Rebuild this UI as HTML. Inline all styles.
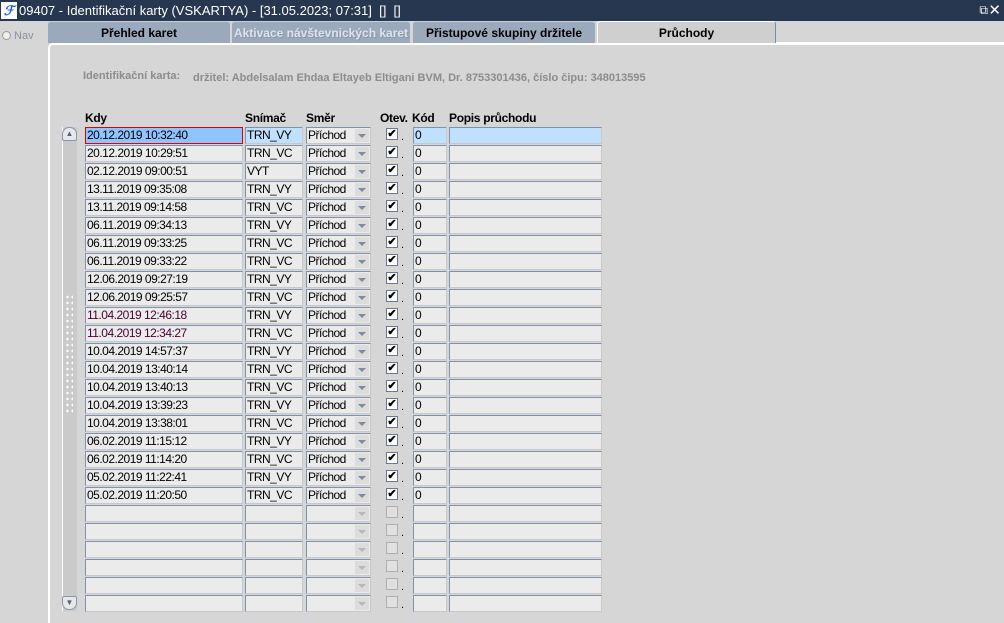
<!DOCTYPE html>
<html><head><meta charset="utf-8"><style>
*{margin:0;padding:0;box-sizing:border-box}
body{width:1004px;height:619px;background:#d6d6d6;font-family:"Liberation Sans",Arial,sans-serif;font-size:12px;position:relative;overflow:hidden}
.abs{position:absolute}
#title{left:0;top:0;width:1004px;height:21px;background:#283750;color:#fff;font-size:13px;line-height:21px;padding-left:19px}
#logo{left:1px;top:2px;width:16px;height:17px;background:#fff;color:#1a5fd0;font-weight:bold;font-style:italic;font-size:13px;line-height:17px;text-align:center}
.tab{top:21px;height:22px;background:#9ba9bd;font-weight:bold;font-size:12px;text-align:center;line-height:22px;border-top:1px solid #c8d0dc;border-radius:3px 3px 0 0}
#panel{left:48px;top:43px;width:960px;height:580px;border-left:2px solid #fff;border-top:2px solid #fff;border-radius:5px 0 0 0;background:#d6d6d6}
.lbl{font-weight:bold;color:#8c8c8c;font-size:11px}
.hd{top:111px;font-weight:bold;font-size:12px;letter-spacing:-0.3px}
.c{position:absolute;height:17px;background:#ebebeb;border:1px solid #8191ab;border-right-color:#c8c8c8;border-bottom-color:#c8c8c8;line-height:15px;padding-left:1px;font-size:12px;letter-spacing:-0.5px;white-space:nowrap;overflow:hidden}
.d{left:85px;width:158px}.s{left:245px;width:58px}.m{left:306px;width:65px}.k{left:413px;width:34px}.p{left:449px;width:153px}
.m span{position:absolute;right:1px;top:1px;width:14px;height:13px;background:#dcdcdc}
.m span:after{content:"";position:absolute;left:3px;top:5px;border:4px solid transparent;border-top:4px solid #7f8a9c;border-bottom:0}
.m.e span:after{border-top-color:#b8b8b8}
.cb{position:absolute;left:386px;width:12px;height:12px;background:#fff;border:1px solid #6a7890;font-size:11px;line-height:10px;text-align:center;font-weight:bold}
.cb.e{background:#e0e0e0;border-color:#b0b0b0}
.dot{position:absolute;left:401px;font-size:11px}
</style></head><body>
<div id="title" class="abs">09407 - Identifikační karty (VSKARTYA) - [31.05.2023; 07:31] &nbsp;[] &nbsp;[]</div>
<div id="logo" class="abs">ℱ</div>
<div class="abs" style="right:16px;top:3px;color:#fff;font-size:12px">⧉</div>
<div class="abs" style="right:3px;top:1px;color:#fff;font-size:15px">✕</div>
<div class="abs" style="left:2px;top:30px;color:#8a8fa0;font-size:11px"><span style="display:inline-block;width:9px;height:9px;border:1px solid #999;border-radius:50%;background:#eee;vertical-align:-1px"></span> Nav</div>
<div id="panel" class="abs"></div>
<div class="abs tab" style="left:48px;width:182px">Přehled karet</div>
<div class="abs tab" style="left:232px;width:178px;color:#dde3ec;text-shadow:1px 1px 0 #8a96a8">Aktivace návštevnických karet</div>
<div class="abs tab" style="left:413px;width:182px">Přistupové skupiny držitele</div>
<div class="abs tab" style="left:597px;width:179px;background:#cfcfcf;border:1px solid #fff;border-right:1px solid #7a8aa0;border-bottom:none">Průchody</div>
<div class="abs" style="left:776px;top:42px;width:228px;height:2px;background:#fff"></div>
<div class="abs lbl" style="left:83px;top:70px">Identifikační karta:</div>
<div class="abs lbl" style="left:193px;top:72px">držitel: Abdelsalam Ehdaa Eltayeb Eltigani BVM, Dr. 8753301436, číslo čipu: 348013595</div>
<div class="abs hd" style="left:85px">Kdy</div><div class="abs hd" style="left:245px">Snímač</div><div class="abs hd" style="left:306px">Směr</div><div class="abs hd" style="left:380px">Otev.</div><div class="abs hd" style="left:412px">Kód</div><div class="abs hd" style="left:449px">Popis průchodu</div>
<div class="abs" style="left:62px;top:127px;width:15px;height:484px;background:#cacaca;border-left:1px solid #fff"></div>
<div class="abs" style="left:62px;top:127px;width:15px;height:14px;border:1px solid #8a96a8;border-radius:7px 7px 2px 2px;background:#e8e8e8;font-size:8px;text-align:center;line-height:12px;color:#56627a">▲</div>
<div class="abs" style="left:62px;top:596px;width:15px;height:14px;border:1px solid #8a96a8;border-radius:2px 2px 7px 7px;background:#e8e8e8;font-size:8px;text-align:center;line-height:12px;color:#56627a">▼</div>
<div class="abs" style="left:65px;top:294px;width:8px;height:120px;background-image:radial-gradient(#fff 1px,transparent 1.2px);background-size:5px 6px"></div>

<div class="c d" style="top:127px;background:#8ec4ff;border:1px solid #e00000">20.12.2019 10:32:40</div><div class="c s" style="top:127px;background:#bfe0ff">TRN_VY</div><div class="c m" style="top:127px">Příchod<span></span></div><div class="cb" style="top:128px">✔</div><div class="dot" style="top:131px">.</div><div class="c k" style="top:127px;background:#bfe0ff">0</div><div class="c p" style="top:127px;background:#bfe0ff"></div>
<div class="c d" style="top:145px">20.12.2019 10:29:51</div><div class="c s" style="top:145px">TRN_VC</div><div class="c m" style="top:145px">Příchod<span></span></div><div class="cb" style="top:146px">✔</div><div class="dot" style="top:149px">.</div><div class="c k" style="top:145px">0</div><div class="c p" style="top:145px"></div>
<div class="c d" style="top:163px">02.12.2019 09:00:51</div><div class="c s" style="top:163px">VYT</div><div class="c m" style="top:163px">Příchod<span></span></div><div class="cb" style="top:164px">✔</div><div class="dot" style="top:167px">.</div><div class="c k" style="top:163px">0</div><div class="c p" style="top:163px"></div>
<div class="c d" style="top:181px">13.11.2019 09:35:08</div><div class="c s" style="top:181px">TRN_VY</div><div class="c m" style="top:181px">Příchod<span></span></div><div class="cb" style="top:182px">✔</div><div class="dot" style="top:185px">.</div><div class="c k" style="top:181px">0</div><div class="c p" style="top:181px"></div>
<div class="c d" style="top:199px">13.11.2019 09:14:58</div><div class="c s" style="top:199px">TRN_VC</div><div class="c m" style="top:199px">Příchod<span></span></div><div class="cb" style="top:200px">✔</div><div class="dot" style="top:203px">.</div><div class="c k" style="top:199px">0</div><div class="c p" style="top:199px"></div>
<div class="c d" style="top:217px">06.11.2019 09:34:13</div><div class="c s" style="top:217px">TRN_VY</div><div class="c m" style="top:217px">Příchod<span></span></div><div class="cb" style="top:218px">✔</div><div class="dot" style="top:221px">.</div><div class="c k" style="top:217px">0</div><div class="c p" style="top:217px"></div>
<div class="c d" style="top:235px">06.11.2019 09:33:25</div><div class="c s" style="top:235px">TRN_VC</div><div class="c m" style="top:235px">Příchod<span></span></div><div class="cb" style="top:236px">✔</div><div class="dot" style="top:239px">.</div><div class="c k" style="top:235px">0</div><div class="c p" style="top:235px"></div>
<div class="c d" style="top:253px">06.11.2019 09:33:22</div><div class="c s" style="top:253px">TRN_VC</div><div class="c m" style="top:253px">Příchod<span></span></div><div class="cb" style="top:254px">✔</div><div class="dot" style="top:257px">.</div><div class="c k" style="top:253px">0</div><div class="c p" style="top:253px"></div>
<div class="c d" style="top:271px">12.06.2019 09:27:19</div><div class="c s" style="top:271px">TRN_VY</div><div class="c m" style="top:271px">Příchod<span></span></div><div class="cb" style="top:272px">✔</div><div class="dot" style="top:275px">.</div><div class="c k" style="top:271px">0</div><div class="c p" style="top:271px"></div>
<div class="c d" style="top:289px">12.06.2019 09:25:57</div><div class="c s" style="top:289px">TRN_VC</div><div class="c m" style="top:289px">Příchod<span></span></div><div class="cb" style="top:290px">✔</div><div class="dot" style="top:293px">.</div><div class="c k" style="top:289px">0</div><div class="c p" style="top:289px"></div>
<div class="c d" style="top:307px;color:#4a0030">11.04.2019 12:46:18</div><div class="c s" style="top:307px">TRN_VY</div><div class="c m" style="top:307px">Příchod<span></span></div><div class="cb" style="top:308px">✔</div><div class="dot" style="top:311px">.</div><div class="c k" style="top:307px">0</div><div class="c p" style="top:307px"></div>
<div class="c d" style="top:325px;color:#4a0030">11.04.2019 12:34:27</div><div class="c s" style="top:325px">TRN_VC</div><div class="c m" style="top:325px">Příchod<span></span></div><div class="cb" style="top:326px">✔</div><div class="dot" style="top:329px">.</div><div class="c k" style="top:325px">0</div><div class="c p" style="top:325px"></div>
<div class="c d" style="top:343px">10.04.2019 14:57:37</div><div class="c s" style="top:343px">TRN_VY</div><div class="c m" style="top:343px">Příchod<span></span></div><div class="cb" style="top:344px">✔</div><div class="dot" style="top:347px">.</div><div class="c k" style="top:343px">0</div><div class="c p" style="top:343px"></div>
<div class="c d" style="top:361px">10.04.2019 13:40:14</div><div class="c s" style="top:361px">TRN_VC</div><div class="c m" style="top:361px">Příchod<span></span></div><div class="cb" style="top:362px">✔</div><div class="dot" style="top:365px">.</div><div class="c k" style="top:361px">0</div><div class="c p" style="top:361px"></div>
<div class="c d" style="top:379px">10.04.2019 13:40:13</div><div class="c s" style="top:379px">TRN_VC</div><div class="c m" style="top:379px">Příchod<span></span></div><div class="cb" style="top:380px">✔</div><div class="dot" style="top:383px">.</div><div class="c k" style="top:379px">0</div><div class="c p" style="top:379px"></div>
<div class="c d" style="top:397px">10.04.2019 13:39:23</div><div class="c s" style="top:397px">TRN_VY</div><div class="c m" style="top:397px">Příchod<span></span></div><div class="cb" style="top:398px">✔</div><div class="dot" style="top:401px">.</div><div class="c k" style="top:397px">0</div><div class="c p" style="top:397px"></div>
<div class="c d" style="top:415px">10.04.2019 13:38:01</div><div class="c s" style="top:415px">TRN_VC</div><div class="c m" style="top:415px">Příchod<span></span></div><div class="cb" style="top:416px">✔</div><div class="dot" style="top:419px">.</div><div class="c k" style="top:415px">0</div><div class="c p" style="top:415px"></div>
<div class="c d" style="top:433px">06.02.2019 11:15:12</div><div class="c s" style="top:433px">TRN_VY</div><div class="c m" style="top:433px">Příchod<span></span></div><div class="cb" style="top:434px">✔</div><div class="dot" style="top:437px">.</div><div class="c k" style="top:433px">0</div><div class="c p" style="top:433px"></div>
<div class="c d" style="top:451px">06.02.2019 11:14:20</div><div class="c s" style="top:451px">TRN_VC</div><div class="c m" style="top:451px">Příchod<span></span></div><div class="cb" style="top:452px">✔</div><div class="dot" style="top:455px">.</div><div class="c k" style="top:451px">0</div><div class="c p" style="top:451px"></div>
<div class="c d" style="top:469px">05.02.2019 11:22:41</div><div class="c s" style="top:469px">TRN_VY</div><div class="c m" style="top:469px">Příchod<span></span></div><div class="cb" style="top:470px">✔</div><div class="dot" style="top:473px">.</div><div class="c k" style="top:469px">0</div><div class="c p" style="top:469px"></div>
<div class="c d" style="top:487px">05.02.2019 11:20:50</div><div class="c s" style="top:487px">TRN_VC</div><div class="c m" style="top:487px">Příchod<span></span></div><div class="cb" style="top:488px">✔</div><div class="dot" style="top:491px">.</div><div class="c k" style="top:487px">0</div><div class="c p" style="top:487px"></div>
<div class="c d" style="top:505px"></div><div class="c s" style="top:505px"></div><div class="c m e" style="top:505px"><span></span></div><div class="cb e" style="top:506px"></div><div class="dot" style="top:509px">.</div><div class="c k" style="top:505px"></div><div class="c p" style="top:505px"></div>
<div class="c d" style="top:523px"></div><div class="c s" style="top:523px"></div><div class="c m e" style="top:523px"><span></span></div><div class="cb e" style="top:524px"></div><div class="dot" style="top:527px">.</div><div class="c k" style="top:523px"></div><div class="c p" style="top:523px"></div>
<div class="c d" style="top:541px"></div><div class="c s" style="top:541px"></div><div class="c m e" style="top:541px"><span></span></div><div class="cb e" style="top:542px"></div><div class="dot" style="top:545px">.</div><div class="c k" style="top:541px"></div><div class="c p" style="top:541px"></div>
<div class="c d" style="top:559px"></div><div class="c s" style="top:559px"></div><div class="c m e" style="top:559px"><span></span></div><div class="cb e" style="top:560px"></div><div class="dot" style="top:563px">.</div><div class="c k" style="top:559px"></div><div class="c p" style="top:559px"></div>
<div class="c d" style="top:577px"></div><div class="c s" style="top:577px"></div><div class="c m e" style="top:577px"><span></span></div><div class="cb e" style="top:578px"></div><div class="dot" style="top:581px">.</div><div class="c k" style="top:577px"></div><div class="c p" style="top:577px"></div>
<div class="c d" style="top:595px"></div><div class="c s" style="top:595px"></div><div class="c m e" style="top:595px"><span></span></div><div class="cb e" style="top:596px"></div><div class="dot" style="top:599px">.</div><div class="c k" style="top:595px"></div><div class="c p" style="top:595px"></div>
</body></html>
